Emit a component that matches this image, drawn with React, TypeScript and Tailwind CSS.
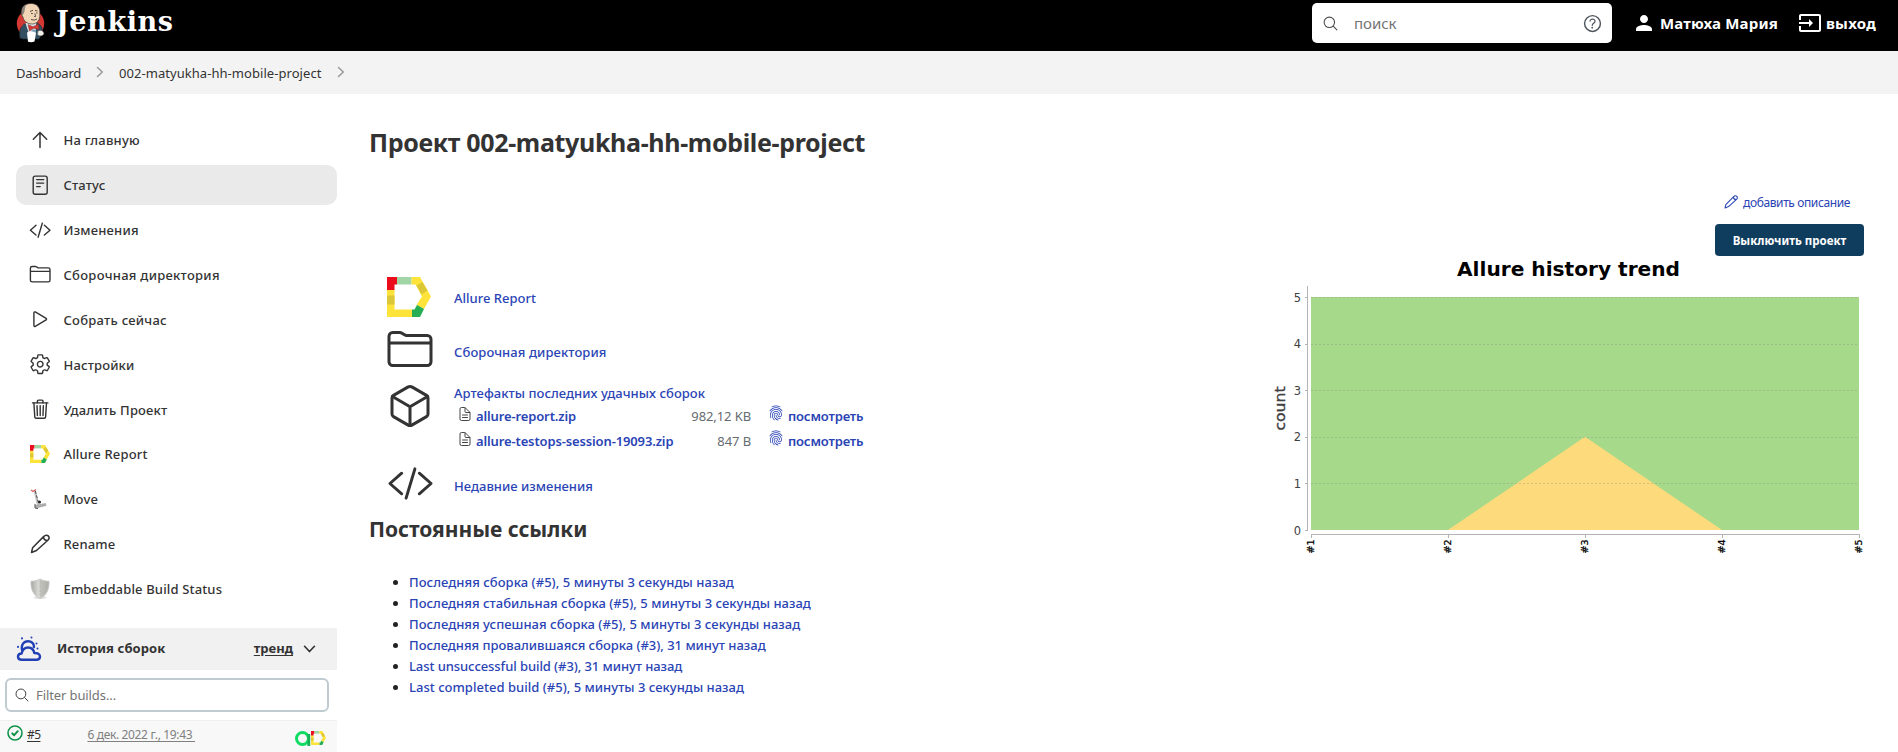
import React from "react";
import {
  IoCodeSlashOutline, IoFolderOutline, IoPlayOutline, IoSettingsOutline, IoTrashOutline, IoReaderOutline,
  IoCubeOutline, IoDocumentTextOutline, IoFingerPrintOutline, IoSearchOutline, IoHelpCircleOutline,
} from "react-icons/io5";
import { MdInput, MdPerson } from "react-icons/md";

function ButlerLogo() {
  return (
    <svg className="w-[30px] h-[40px] shrink-0" viewBox="0 0 30 40">
      <circle cx="14.500" cy="20.500" r="13.700" fill="#d33833" />
      <path d="M4 35 C3 28 4 24 9 21 L21 20 C26 22 27 27 26 31 L23 36 H7 Z" fill="#335061" stroke="#1c2b38" strokeWidth=".7" />
      <path d="M9.500 20 L13 31 L20 29 L20.500 19 Z" fill="#dfe6ea" />
      <path d="M8 20 L12.500 33 H9 L5.500 25 Z M20.500 20 L20 32 L24 30 L23 22 Z" fill="#335061" />
      <path d="M5.500 12 C4.500 4 9 .5 15 .5 C21 .5 24.500 4.500 23.800 11 C24.300 17 21 20.800 16.500 21 C11 21 7.500 18 7 14 Z" fill="#f0d6b7" stroke="#3a3532" strokeWidth=".7" />
      <path d="M6 6.500 C6.500 3.500 8.500 2 10.500 1.500 C8.500 4 9 7.500 8 10 L6 13 Z" fill="#8a8178" />
      <path d="M14 8.500 l3 -1.200 M19 7.500 l2.500 .5 M15 10.500 h1.800 M20 10 h1.500 M18.800 10.500 l.8 3 h-1.500 M15 16.500 q3.500 1.500 6 -.5" fill="none" stroke="#4b403a" strokeWidth=".9" />
      <path d="M12 21.500 L17 23.700 L22.500 21 L23 26.500 L17.800 25.200 L13.500 28 Z" fill="#d33833" stroke="#7c1a18" strokeWidth=".4" />
      <path d="M15.500 26.500 h4.500 v4 h-4.500 z" fill="#7ea0b8" />
      <path d="M11 29.500 C14 28 18 28.500 20 30 L18.500 38.500 C16.500 39.500 14 39.500 12 38.800 Z" fill="#fff" />
      <path d="M22 28 C25 26.500 28 28 27.800 31 C26.500 33.500 23 33 21.500 31.500 Z" fill="#f3efe9" stroke="#6d6a6a" strokeWidth=".5" />
    </svg>
  );
}

function AllureLogo({ className }: { className: string }) {
  return (
    <svg className={className} viewBox="0 0 44 40" preserveAspectRatio="none">
      <path d="M0 12 H7.500 V32.500 H25 V40 H0 Z" fill="#fee33a" />
      <path d="M0 18.500 H7.500 V27.500 H0 Z" fill="#dcc736" />
      <path d="M0 0 H10 V7.500 H7.500 V13 H0 Z" fill="#eb0d1b" />
      <path d="M10 0 H24.500 V7.500 H10 Z" fill="#a2d5a6" />
      <path d="M24.500 0 H33 L44 19.500 L37 32 L29.500 28 L35 19.500 L28.500 7.500 H24.500 Z" fill="#fee33a" />
      <path d="M35.500 5 L40.500 13.500 L34.500 17.500 L29.500 8.500 Z" fill="#dcc736" />
      <path d="M30 28 L37 32 L33 40 H25 V32.500 H27.500 Z" fill="#26ae52" />
    </svg>
  );
}

function ArrowUp() {
  return (
    <svg className="size-[22px]" viewBox="0 0 22 22" fill="none" stroke="currentColor" strokeWidth="1.500" strokeLinecap="round" strokeLinejoin="round">
      <path d="M4.300 10.300 L11 3.500 L17.700 10.300 M11 4 V18.500" />
    </svg>
  );
}

function Pencil({ className }: { className: string }) {
  return (
    <svg className={className} viewBox="0 0 20 20" fill="none" stroke="currentColor" strokeWidth="1.500" strokeLinecap="round" strokeLinejoin="round">
      <path d="M1.500 18.500 L2.600 13.800 L13.800 2.400 C15.300 .7 17.300 1 18.200 1.900 C19.300 3 19.300 4.800 17.900 6.200 L6.500 16.500 Z M13.600 2.700 C13.600 5 15 6.500 17.500 6.500" />
    </svg>
  );
}

function Scooter() {
  return (
    <svg className="size-[22px]" viewBox="0 0 22 22">
      <path d="M5.500 2 L9 17" stroke="#c4c4c4" strokeWidth="2.200" />
      <path d="M6.300 3 L9.500 15" stroke="#444" strokeWidth="1" strokeDasharray="3 1.500" />
      <path d="M2 2 L4 3.500 L7 1.500" stroke="#e06464" strokeWidth="1.400" fill="none" />
      <path d="M6 17.500 L16.500 15.500 L17 17.500 L7 20 Z" fill="#b0b0b0" stroke="#888" strokeWidth=".5" />
      <circle cx="10.500" cy="14" r="1.500" fill="#222" />
      <path d="M6 16 v4 l3 .5" stroke="#555" strokeWidth="1" fill="none" />
    </svg>
  );
}

function Shield() {
  return (
    <svg className="size-[22px]" viewBox="0 0 22 22">
      <defs>
        <linearGradient id="steel" x1="0" x2="1">
          <stop offset="0" stopColor="#a6a7a2" />
          <stop offset=".45" stopColor="#dcddd8" />
          <stop offset=".55" stopColor="#c0c1bb" />
          <stop offset="1" stopColor="#adaea8" />
        </linearGradient>
      </defs>
      <ellipse cx="11" cy="19.500" rx="6.500" ry="1.500" fill="#dedede" />
      <path d="M11 1 C8.500 2.500 5 3.200 2 3.200 C1.600 10 3.500 17 11 20.500 C18.500 17 20.400 10 20 3.200 C17 3.200 13.500 2.500 11 1 Z" fill="url(#steel)" stroke="#c9cac6" strokeWidth=".9" />
      <path d="M11 3 V18" stroke="#8f908b" strokeWidth=".7" strokeDasharray="1 1.500" />
    </svg>
  );
}

function Weather() {
  return (
    <svg className="size-[26px]" viewBox="0 0 26 26" fill="none" stroke="#2240b4" strokeWidth="2.400" strokeLinecap="round" strokeLinejoin="round">
      <path d="M6.200 14.500 C4.600 8.500 8 5.200 12 5.200 C15.800 5.200 18.200 7.900 18 11" />
      <path d="M5.800 23.800 C2.800 23.800 2 22 2 20.800 C2 18.800 3.600 17.600 5.600 17.500 C6.500 13.500 9 11.500 12.200 11.500 C15.500 11.500 17.600 13.500 18.300 17 C21.500 16.700 24 18.300 24 20.600 C24 22.700 22.500 23.800 20.500 23.800 Z" />
      <path d="M6 2.300 v.1 M15.500 1.500 v.1 M20.500 7.500 v.1 M2 10.800 v.1 M21.500 12.500 v.1" strokeWidth="2" />
    </svg>
  );
}

function Chevron({ className }: { className: string }) {
  return (
    <svg className={className} viewBox="0 0 10 12" fill="none" stroke="currentColor" strokeWidth="1.500" strokeLinecap="round" strokeLinejoin="round">
      <path d="M2.500 1.500 L7.300 6 L2.500 10.500" />
    </svg>
  );
}

const tasks = [
  { icon: <ArrowUp />, label: "На главную", cls: "tracking-[0.22px]" },
  { icon: <IoReaderOutline />, label: "Статус", cls: "tracking-[0.15px]", active: true },
  { icon: <IoCodeSlashOutline />, label: "Изменения", cls: "tracking-[0.2px]" },
  { icon: <IoFolderOutline />, label: "Сборочная директория", cls: "tracking-[0.28px]" },
  { icon: <IoPlayOutline />, label: "Собрать сейчас", cls: "tracking-[0.25px]" },
  { icon: <IoSettingsOutline />, label: "Настройки", cls: "tracking-[0.16px]" },
  { icon: <IoTrashOutline />, label: "Удалить Проект", cls: "tracking-[0.18px]" },
  { icon: <AllureLogo className="w-[20px] h-[18px]" />, label: "Allure Report", cls: "tracking-[0.17px]" },
  { icon: <Scooter />, label: "Move", cls: "tracking-[0.15px]" },
  { icon: <Pencil className="size-[20px]" />, label: "Rename", cls: "tracking-[0.12px]" },
  { icon: <Shield />, label: "Embeddable Build Status", cls: "tracking-[0.15px]" },
];

const artifacts = [
  { name: "allure-report.zip", size: "982,12 KB" },
  { name: "allure-testops-session-19093.zip", size: "847 B" },
];

const permalinks = [
  { text: "Последняя сборка (#5), 5 минуты 3 секунды назад", cls: "tracking-[0.055px]" },
  { text: "Последняя стабильная сборка (#5), 5 минуты 3 секунды назад", cls: "tracking-[0.03px]" },
  { text: "Последняя успешная сборка (#5), 5 минуты 3 секунды назад", cls: "tracking-[0.04px]" },
  { text: "Последняя провалившаяся сборка (#3), 31 минут назад", cls: "tracking-[-0.02px]" },
  { text: "Last unsuccessful build (#3), 31 минут назад", cls: "tracking-[-0.08px]" },
  { text: "Last completed build (#5), 5 минуты 3 секунды назад", cls: "tracking-[0.02px]" },
];

function TrendChart() {
  const y = (v: number) => 274 - v * 46.6;
  const xs = [41, 178, 315, 452, 589];
  return (
    <svg className="block w-[604px] h-[310px] -mr-[6px] shrink-0 font-['DejaVu_Sans']" viewBox="0 0 604 310">
      <text x="187" y="20" fontSize="20" fontWeight="bold" textLength="223" lengthAdjust="spacingAndGlyphs">Allure history trend</text>
      <rect x="41" y={y(5)} width="548" height="233" fill="#a7d98a" />
      <path d={`M178 ${y(0)} L315 ${y(2)} L452 ${y(0)} Z`} fill="#fddb7c" />
      {[1, 2, 3, 4, 5].map((v) => (
        <line key={v} x1="41" x2="589" y1={Math.round(y(v)) + 0.5} y2={Math.round(y(v)) + 0.5} stroke="#808080" strokeOpacity=".3" strokeDasharray="2 2" />
      ))}
      <path d="M37.500 30 V275 M41 278.500 H590" stroke="#b4b4b4" fill="none" />
      {[0, 1, 2, 3, 4, 5].map((v) => (
        <g key={v}>
          <line x1="35" x2="38" y1={Math.round(y(v)) + 0.5} y2={Math.round(y(v)) + 0.5} stroke="#b4b4b4" />
          <text x="31" y={y(v) + 4.5} fontSize="11.500" textAnchor="end" fill="#404040">{v}</text>
        </g>
      ))}
      {xs.map((x, i) => (
        <g key={x}>
          <line x1={x + 0.5} x2={x + 0.5} y1="279" y2="282" stroke="#b4b4b4" />
          <text transform={`translate(${x + 3} 297.5) rotate(-90)`} fontSize="9.500" fill="#000" stroke="#000" strokeWidth=".3">#{i + 1}</text>
        </g>
      ))}
      <text transform="translate(15 174.500) rotate(-90)" fontSize="14" fill="#404040" stroke="#404040" strokeWidth=".35" textLength="44" lengthAdjust="spacingAndGlyphs">count</text>
    </svg>
  );
}

export default function App() {
  return (
    <div className="w-full h-[752px] overflow-hidden flex flex-col bg-white text-[#333] text-[13px] font-['Noto_Sans','Open_Sans',sans-serif]">
      <header className="h-[51px] shrink-0 bg-black flex items-center justify-between pl-4 pr-[22px]">
        <div className="flex items-start h-full pt-[3px]">
          <ButlerLogo />
          <span className="ml-[10px] mt-px text-white text-[27px] leading-[36px] font-bold tracking-[0.6px] font-['DejaVu_Serif',serif]">Jenkins</span>
        </div>
        <div className="flex items-center h-full pb-[5px] text-white text-[15px] font-bold">
          <div className="w-[300px] h-10 rounded-[5px] bg-white flex items-center px-[10px] text-[#757575]">
            <IoSearchOutline className="size-[17px] text-[#4a4a4a]" />
            <span className="ml-[15px] flex-1 font-normal">поиск</span>
            <IoHelpCircleOutline className="size-[23px] -mr-[2px] text-[#4d545d]" />
          </div>
          <MdPerson className="size-6 ml-5" />
          <span className="ml-1 tracking-[0.17px]">Матюха Мария</span>
          <MdInput className="size-6 ml-[20px]" />
          <span className="ml-[4px] tracking-[0.25px]">выход</span>
        </div>
      </header>

      <nav className="h-[43px] shrink-0 bg-[#f3f3f3] flex items-center pl-4">
        <span className="pt-[3px] tracking-[-0.26px]">Dashboard</span>
        <Chevron className="w-[10px] h-3 ml-[14px] mb-[2px] text-[#999]" />
        <span className="ml-[14px] pt-[3px] tracking-[0.055px]">002-matyukha-hh-mobile-project</span>
        <Chevron className="w-[10px] h-3 ml-[15px] mb-[2px] text-[#999]" />
      </nav>

      <div className="flex flex-1 min-h-0">
        <aside className="w-[337px] shrink-0 flex flex-col">
          <div className="mt-[26px] flex flex-col gap-[4.9px] pl-4">
            {tasks.map((t) => (
              <div key={t.label} className={t.active ? "h-10 rounded-[10px] bg-[#eaeaea] flex items-center" : "h-10 flex items-center"}>
                <span className="w-[47.5px] flex justify-center text-[22.4px] text-[#333]">{t.icon}</span>
                <span className={"font-medium pt-[2px] " + t.cls}>{t.label}</span>
              </div>
            ))}
          </div>
          <div className="mt-[19px] h-[42px] shrink-0 bg-[#f1f1f1] flex items-center pl-4 pr-[22px] font-bold">
            <Weather />
            <span className="ml-[15px] flex-1 tracking-[0.08px]">История сборок</span>
            <span className="underline underline-offset-2">тренд</span>
            <Chevron className="w-[11px] h-[14px] ml-[11px] rotate-90" />
          </div>
          <div className="mt-2 ml-[5px] mr-2 h-[34px] shrink-0 rounded-[6px] border-2 border-[#bfcbd0] flex items-center pl-[7px] text-[#757575]">
            <IoSearchOutline className="size-4 text-[#444]" />
            <span className="ml-[6px] pt-px tracking-[-0.1px]">Filter builds...</span>
          </div>
          <div className="mt-2 h-10 shrink-0 border-t border-[#efefef] bg-[#f8f8f8] flex items-start pl-[7px] text-[12px]">
            <svg className="size-4 mt-1" viewBox="0 0 16 16" fill="none" stroke="#0f9349" strokeLinecap="round" strokeLinejoin="round">
              <circle cx="8" cy="8" r="7" strokeWidth="1.600" />
              <path d="M5.300 8.400 L7.200 10.200 L10.800 6.200" strokeWidth="2" />
            </svg>
            <span className="ml-1 mt-[5px] underline underline-offset-2 tracking-[-0.6px]">#5</span>
            <span className="ml-[47px] mt-[5px] underline underline-offset-2 text-[#808080] tracking-[-0.35px] whitespace-pre">6 дек. 2022 г., 19:43 </span>
            <svg className="w-[16px] h-[16px] ml-auto mt-[9px]" viewBox="0 0 16 16" fill="none" stroke="#0fdc63" strokeWidth="3">
              <circle cx="7.500" cy="8.500" r="6" />
              <path d="M13.800 4 V16" stroke="#16b356" strokeWidth="2.800" />
            </svg>
            <AllureLogo className="w-[15px] h-[14px] mt-[10px] mr-[11px]" />
          </div>
        </aside>

        <main className="flex-1 flex justify-between pl-8 pr-[30px]">
          <section className="w-[520px]">
            <h1 className="mt-[31px] h-[34px] text-[25px] leading-[34px] font-bold tracking-[-0.33px] whitespace-nowrap">Проект 002-matyukha-hh-mobile-project</h1>
            <div className="mt-[114px] pl-[18px] font-medium text-[#2a44b5]">
              <div className="h-[48px] flex items-center">
                <AllureLogo className="w-[44px] h-[40px]" />
                <span className="ml-[23px] mt-[3px]">Allure Report</span>
              </div>
              <div className="mt-1 h-[48px] flex items-center">
                <IoFolderOutline className="size-12 -ml-[1px] text-[#333]" />
                <span className="ml-[20px] mt-[7px] tracking-[0.09px]">Сборочная директория</span>
              </div>
              <div className="mt-2 h-[76px] flex">
                <IoCubeOutline className="size-12 -ml-[1px] mt-px text-[#333]" />
                <div className="ml-[20px] pt-px">
                  <div className="h-[23px] leading-[23px] tracking-[0.045px]">Артефакты последних удачных сборок</div>
                  {artifacts.map((a) => (
                    <div key={a.name} className="h-[25px] flex items-start pl-[3px]">
                      <IoDocumentTextOutline className="size-4 mt-px text-[#444]" />
                      <span className="ml-[3px] w-[199px] leading-[23px] font-semibold tracking-[-0.13px] whitespace-nowrap">{a.name}</span>
                      <span className="w-[76px] leading-[23px] text-right font-normal text-[#666b70] tracking-[-0.1px]">{a.size}</span>
                      <IoFingerPrintOutline className="size-[16px] ml-[17px] text-[#1f3ab2]" />
                      <span className="ml-[4px] leading-[23px] font-semibold tracking-[-0.15px]">посмотреть</span>
                    </div>
                  ))}
                </div>
              </div>
              <div className="h-[48px] flex items-center">
                <IoCodeSlashOutline className="size-[47px] mt-[5px] text-[#333]" />
                <span className="ml-[20px] mt-[11px] tracking-[0.02px]">Недавние изменения</span>
              </div>
            </div>
            <h2 className="mt-[9px] h-[30px] text-[21px] leading-[30px] font-bold tracking-[-0.05px]">Постоянные ссылки</h2>
            <ul className="mt-[28px] pl-[40px] list-disc font-medium text-[#2a44b5] marker:text-[#222]">
              {permalinks.map((p) => (
                <li key={p.text} className={"h-[21px] leading-[21px] whitespace-nowrap " + p.cls}>{p.text}</li>
              ))}
            </ul>
          </section>

          <section className="w-[604px] flex flex-col items-end">
            <div className="mt-[98px] mr-[18px] h-5 flex items-center text-[12px] text-[#2a44b5]">
              <Pencil className="size-[14px]" />
              <span className="ml-[5px] pt-px tracking-[-0.39px]">добавить описание</span>
            </div>
            <button className="mt-3 mr-[4px] w-[149px] h-8 shrink-0 rounded-[4px] bg-[#0f3d5e] text-white text-[11.500px] font-bold pt-[2px]">Выключить проект</button>
            <TrendChart />
          </section>
        </main>
      </div>
    </div>
  );
}
